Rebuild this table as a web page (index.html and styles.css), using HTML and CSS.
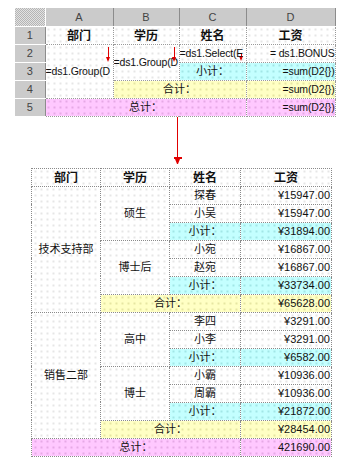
FILE: index.html
```html
<!DOCTYPE html>
<html>
<head>
<meta charset="utf-8">
<link rel="stylesheet" href="styles.css">
</head>
<body>
<div class="page">
  <table class="grid">
    <colgroup>
      <col class="c-rn"><col class="c-a"><col class="c-b"><col class="c-c"><col class="c-d">
    </colgroup>
    <tr class="hdr">
      <td class="gray corner"></td>
      <td class="gray colh">A</td>
      <td class="gray colh">B</td>
      <td class="gray colh">C</td>
      <td class="gray colh">D</td>
    </tr>
    <tr>
      <td class="gray rn">1</td>
      <td class="th">部门</td>
      <td class="th">学历</td>
      <td class="th">姓名</td>
      <td class="th">工资</td>
    </tr>
    <tr>
      <td class="cell gray rn">2</td>
      <td class="cell left formula" rowspan="3"><div class="clip">=ds1.Group(D</div><span class="mini-arrow"></span></td>
      <td class="cell left formula" rowspan="2"><div class="clip">=ds1.Group(D</div><span class="mini-arrow"></span></td>
      <td class="cell left formula"><span class="mini-arrow short"></span><div class="clip">=ds1.Select(E</div></td>
      <td class="cell right formula"><div class="clip">= ds1.BONUS</div></td>
    </tr>
    <tr>
      <td class="gray rn">3</td>
      <td class="cell center cyan">小计：</td>
      <td class="cell right cyan formula">=sum(D2{})</td>
    </tr>
    <tr>
      <td class="gray rn">4</td>
      <td class="cell center yellow" colspan="2">合计：</td>
      <td class="cell right yellow formula">=sum(D2{})</td>
    </tr>
    <tr>
      <td class="gray rn">5</td>
      <td class="cell center pink" colspan="3">总计：</td>
      <td class="cell right pink formula">=sum(D2{})</td>
    </tr>
  </table>

  <div class="connector">
    <svg width="339" height="51" viewBox="0 0 339 51">
      <line x1="177.5" y1="0" x2="177.5" y2="42" stroke="#e00000" stroke-width="1"/>
      <polygon points="174,40 182,40 182,42 180,42 178,47 177,47 175,42 174,42" fill="#e00000"/>
    </svg>
  </div>

  <table class="report">
    <colgroup>
      <col class="r-a"><col class="r-b"><col class="r-c"><col class="r-d">
    </colgroup>
    <tr>
      <td class="th">部门</td><td class="th">学历</td><td class="th">姓名</td><td class="th">工资</td>
    </tr>
    <tr>
      <td class="cell center" rowspan="7">技术支持部</td>
      <td class="cell center" rowspan="3">硕生</td>
      <td class="cell center">探春</td><td class="cell right">¥15947.00</td>
    </tr>
    <tr><td class="cell center">小吴</td><td class="cell right">¥15947.00</td></tr>
    <tr><td class="cell center cyan">小计：</td><td class="cell right cyan">¥31894.00</td></tr>
    <tr>
      <td class="cell center" rowspan="3">博士后</td>
      <td class="cell center">小宛</td><td class="cell right">¥16867.00</td>
    </tr>
    <tr><td class="cell center">赵宛</td><td class="cell right">¥16867.00</td></tr>
    <tr><td class="cell center cyan">小计：</td><td class="cell right cyan">¥33734.00</td></tr>
    <tr><td class="cell center yellow" colspan="2">合计：</td><td class="cell right yellow">¥65628.00</td></tr>
    <tr>
      <td class="cell center" rowspan="7">销售二部</td>
      <td class="cell center" rowspan="3">高中</td>
      <td class="cell center">李四</td><td class="cell right">¥3291.00</td>
    </tr>
    <tr><td class="cell center">小李</td><td class="cell right">¥3291.00</td></tr>
    <tr><td class="cell center cyan">小计：</td><td class="cell right cyan">¥6582.00</td></tr>
    <tr>
      <td class="cell center" rowspan="3">博士</td>
      <td class="cell center">小霸</td><td class="cell right">¥10936.00</td>
    </tr>
    <tr><td class="cell center">周霸</td><td class="cell right">¥10936.00</td></tr>
    <tr><td class="cell center cyan">小计：</td><td class="cell right cyan">¥21872.00</td></tr>
    <tr><td class="cell center yellow" colspan="2">合计：</td><td class="cell right yellow">¥28454.00</td></tr>
    <tr><td class="cell center pink" colspan="3">总计：</td><td class="cell right pink">421690.00</td></tr>
  </table>
</div>
</body>
</html>
```

FILE: styles.css
```css
html, body {
  margin: 0;
  padding: 0;
  background: #ffffff;
}
body {
  width: 339px;
  height: 460px;
  overflow: hidden;
  font-family: "Liberation Sans", "Noto Sans CJK SC", sans-serif;
  font-size: 11px;
  color: #111;
}
.page {
  display: flex;
  flex-direction: column;
  align-items: flex-start;
}

/* ---------- design grid ---------- */
.grid {
  margin: 8px 0 0 15px;
  border-collapse: collapse;
  table-layout: fixed;
  width: 320px;
}
.c-rn { width: 30px; }
.c-a { width: 68px; }
.c-b { width: 66px; }
.c-c { width: 67px; }
.c-d { width: 89px; }

.grid tr { height: 18px; }
.grid td {
  padding: 0 1px;
  border: 1px dotted #9a9a9a;
  white-space: nowrap;
  overflow: hidden;
  line-height: 16px;
  background-color: #fff;
  background-image: radial-gradient(circle, #d8d8d8 0.6px, transparent 0.9px);
  background-size: 6px 6px;
}
.grid td.gray {
  background-color: #cbcbcb;
  background-image: repeating-conic-gradient(#b4b4b4 0 25%, #e2e2e2 0 50%);
  background-size: 2px 2px;
  color: #444;
  text-align: center;
  border: 1px solid #fff;
}
.grid td.colh {
  border-left: 1px solid #8c8c8c;
  border-right: 1px solid #8c8c8c;
  border-top: 0;
}
.grid td.corner {
  border-top: 0;
  border-left: 0;
}
.grid td.rn {
  border-left: 0;
  border-right: 1px solid #8c8c8c;
}
.grid td.formula {
  font-size: 10.5px;
  letter-spacing: -0.15px;
  padding: 0;
}

.th {
  text-align: center;
  font-weight: bold;
  font-size: 12px;
  font-family: "Noto Sans CJK SC", sans-serif;
}
.cell { position: relative; }
.left { text-align: left; }
.right { text-align: right; }
.center { text-align: center; }
.clip {
  overflow: hidden;
  white-space: nowrap;
  position: relative;
}

.mini-arrow {
  position: absolute;
  top: 2px;
  right: 4px;
  width: 1px;
  height: 13px;
  background: #e00000;
}
.mini-arrow::after {
  content: "";
  position: absolute;
  left: -2px;
  bottom: -2px;
  border-left: 2.5px solid transparent;
  border-right: 2.5px solid transparent;
  border-top: 5px solid #e00000;
}
.mini-arrow.short {
  top: 8px;
  height: 6px;
}

.cyan {
  background-color: #c4ffff !important;
  background-image: radial-gradient(circle, #8fd8d8 0.6px, transparent 0.9px) !important;
  background-size: 6px 6px !important;
}
.yellow {
  background-color: #ffffc4 !important;
  background-image: radial-gradient(circle, #d8d890 0.6px, transparent 0.9px) !important;
  background-size: 6px 6px !important;
}
.pink {
  background-color: #ffc8ff !important;
  background-image: radial-gradient(circle, #d898d8 0.6px, transparent 0.9px) !important;
  background-size: 6px 6px !important;
}

/* ---------- connector ---------- */
.connector {
  height: 51px;
  line-height: 0;
}
.connector svg { display: block; }

/* ---------- report ---------- */
.report {
  margin-left: 31px;
  border-collapse: collapse;
  table-layout: fixed;
  width: 300px;
  border: 1px dotted #777;
}
.r-a { width: 69px; }
.r-b { width: 69px; }
.r-c { width: 71px; }
.r-d { width: 91px; }
.report tr { height: 18px; }
.report td {
  padding: 0 1px;
  border: 1px dotted #8a8a8a;
  white-space: nowrap;
  overflow: hidden;
  line-height: 16px;
  background-color: #fff;
  background-image: radial-gradient(circle, #d8d8d8 0.6px, transparent 0.9px);
  background-size: 6px 6px;
}
```
